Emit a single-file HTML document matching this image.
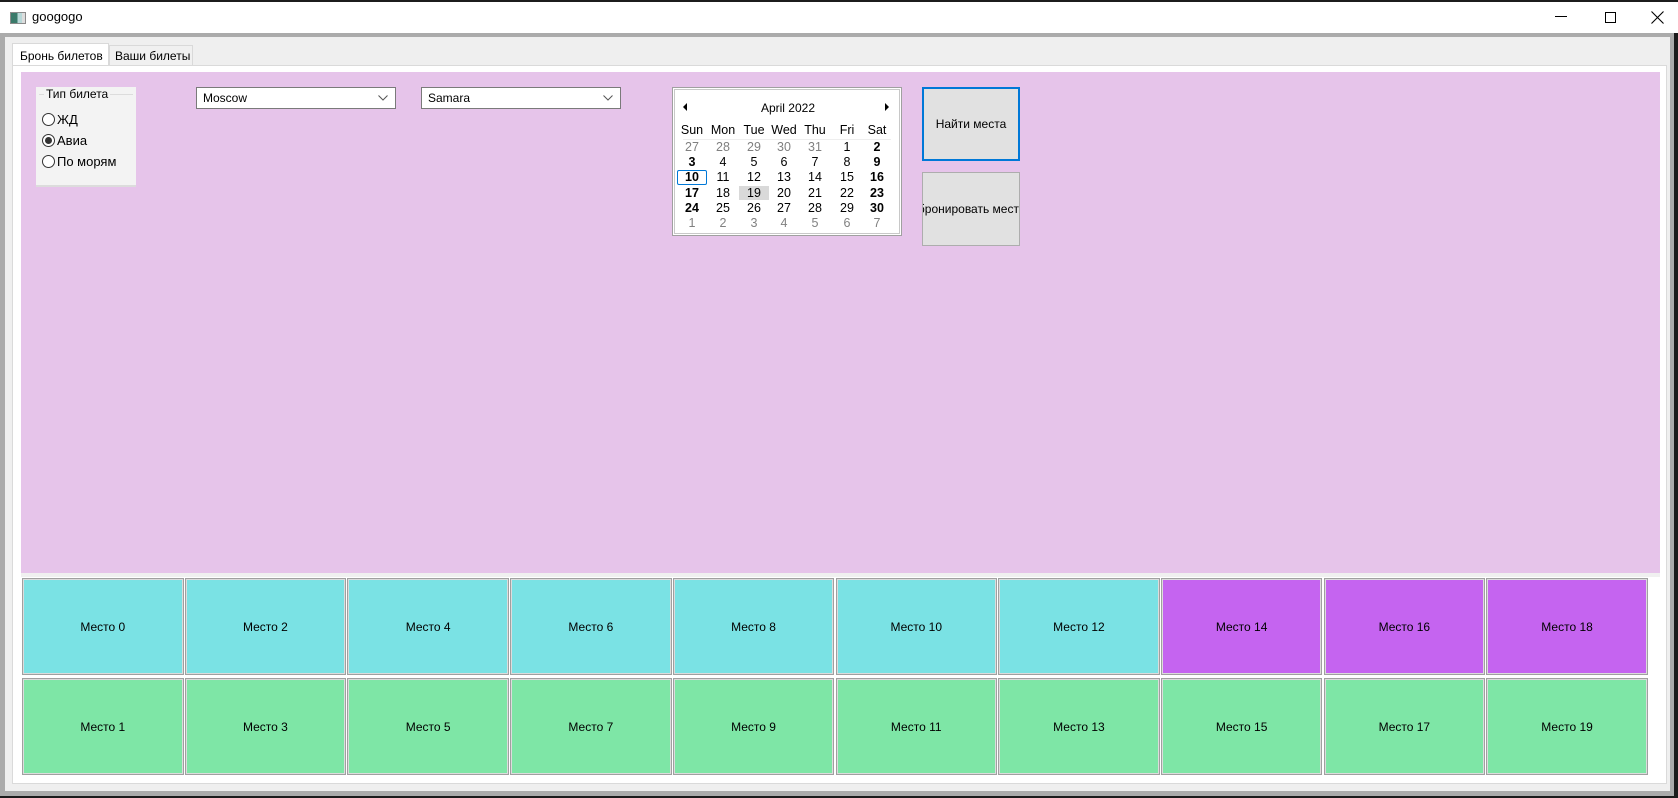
<!DOCTYPE html>
<html><head><meta charset="utf-8"><style>
*{margin:0;padding:0;box-sizing:border-box}
body{width:1678px;height:798px;background:#1c1c1c;position:relative;overflow:hidden;font-family:"Liberation Sans","DejaVu Sans",sans-serif;font-size:12px;color:#000}
.a{position:absolute}
.title{left:0;top:2px;width:1678px;height:31px;background:#fff}
.frame{left:0;top:33px;width:1674px;height:763px;background:#ababab}
.body{left:5px;top:37px;width:1665px;height:754px;background:#efefef}
.page{left:12px;top:65px;width:1655px;height:719px;background:#fff;border:1px solid #dadada}
.purple{left:21px;top:72px;width:1639px;height:501px;background:#e6c4ea}
.strip{left:21px;top:573px;width:1639px;height:4px;background:#f0f0f0}
.combo{height:22px;background:#fff;border:1px solid #7a7a7a;padding:3px 0 0 6px}
.combo svg{position:absolute;right:7px;top:7px}
.seat{display:flex;align-items:center;justify-content:center;border:1px solid #a0a0a0;box-shadow:inset 0 0 0 1px #dcdcdc}
.cal{left:672px;top:87px;width:230px;height:149px;background:#fff;border:1px solid #a0a0a0;box-shadow:inset 0 0 0 1px #fff,inset 0 0 0 2px #c8c8c8}
.cal span{position:absolute;width:24px;text-align:center;font-size:12.5px}
.g{color:#808080}.b{font-weight:bold}
.radio{width:13px;height:13px;border:1px solid #333;border-radius:50%;background:#fff}
</style></head><body>
<div class="a title"></div>
<div class="a" style="left:10px;top:12px;width:16px;height:12px;border:1px solid #8a8a8a;background:linear-gradient(90deg,#3a7a6a 0 45%,#b8d8d8 45% 80%,#ddd 80%)"></div>
<div class="a" style="left:32px;top:9px;font-size:13px">googogo</div>
<div class="a" style="left:1555px;top:16px;width:12px;height:1px;background:#000"></div>
<div class="a" style="left:1605px;top:12px;width:11px;height:11px;border:1px solid #000"></div>
<svg class="a" style="left:1651px;top:11px" width="13" height="13"><path d="M0.5 0.5L12.5 12.5M12.5 0.5L0.5 12.5" stroke="#000" stroke-width="1.1"/></svg>
<div class="a frame"></div>
<div class="a body"></div>
<div class="a" style="left:12px;top:43px;width:97px;height:23px;background:#fff;border:1px solid #d9d9d9;border-bottom:none;padding:5px 0 0 7px">Бронь билетов</div>
<div class="a" style="left:109px;top:45px;width:84px;height:20px;background:#f0f0f0;border:1px solid #d9d9d9;border-bottom:none;padding:3px 0 0 5px">Ваши билеты</div>
<div class="a page"></div>
<div class="a purple"></div>
<div class="a strip"></div>
<div class="a" style="left:36px;top:87px;width:100px;height:100px;background:#f3f3f3;border-bottom:2px solid #dcdcdc"></div>
<div class="a" style="left:39px;top:94px;width:94px;height:1px;background:#dcdcdc"></div>
<div class="a" style="left:44px;top:87px;background:#f3f3f3;padding:0 2px">Тип билета</div>
<div class="a radio" style="left:42px;top:113px"></div><div class="a" style="left:57px;top:112px;font-size:13px">ЖД</div>
<div class="a radio" style="left:42px;top:134px"></div><div class="a" style="left:45px;top:137px;width:7px;height:7px;border-radius:50%;background:#333"></div><div class="a" style="left:57px;top:133px;font-size:13px">Авиа</div>
<div class="a radio" style="left:42px;top:155px"></div><div class="a" style="left:57px;top:154px;font-size:13px">По морям</div>
<div class="a combo" style="left:196px;top:87px;width:200px">Moscow<svg width="10" height="6"><path d="M0.5 0.5L5 5L9.5 0.5" fill="none" stroke="#555"/></svg></div>
<div class="a combo" style="left:421px;top:87px;width:200px">Samara<svg width="10" height="6"><path d="M0.5 0.5L5 5L9.5 0.5" fill="none" stroke="#555"/></svg></div>
<div class="a cal">
<svg class="a" style="left:10px;top:15px" width="5" height="8"><path d="M4 0L0 4L4 8Z"/></svg>
<svg class="a" style="left:212px;top:15px" width="5" height="8"><path d="M0 0L4 4L0 8Z"/></svg>
<div class="a" style="left:0;top:13px;width:230px;text-align:center">April 2022</div>
<div class="a" style="left:10px;top:51px;width:208px;height:1px;background:#eee"></div>
<div id="cal"></div>
</div>
<div class="a" style="left:922px;top:87px;width:98px;height:74px;background:#e1e1e1;border:2px solid #0078d7;display:flex;align-items:center;justify-content:center">Найти места</div>
<div class="a" style="left:922px;top:172px;width:98px;height:74px;background:#e1e1e1;border:1px solid #adadad;overflow:hidden;white-space:nowrap"><span style="position:absolute;left:-19px;top:29px">Забронировать места</span></div>
<div id="seats"></div>
<script>
var c=document.getElementById('cal'),h='';
var xs=[7,38,69,99,130,162,192];
var names=['Sun','Mon','Tue','Wed','Thu','Fri','Sat'];
names.forEach(function(n,i){h+='<span style="left:'+(xs[i]-2)+'px;top:35px;width:28px">'+n+'</span>'});
var d=[[27,28,29,30,31,1,2],[3,4,5,6,7,8,9],[10,11,12,13,14,15,16],[17,18,19,20,21,22,23],[24,25,26,27,28,29,30],[1,2,3,4,5,6,7]];
d.forEach(function(r,ri){r.forEach(function(v,i){var cls='';if(ri==0&&i<5||ri==5)cls='g';else if(i==0||i==6)cls='b';var st='left:'+xs[i]+'px;top:'+(52+ri*15.2)+'px;';
if(ri==2&&i==0)st+='border:1px solid #0078d7;border-radius:2px;height:15px;line-height:13px;width:30px;margin-left:-3px;';
if(ri==3&&i==2)st+='background:#d9d9d9;width:30px;margin-left:-3px;';
h+='<span class="'+cls+'" style="'+st+'">'+v+'</span>'})});
c.innerHTML=h;
var s='',w=161.5,p=162.7;
for(var i=0;i<20;i++){var col=Math.floor(i/2),row=i%2;var bg=row?'#7ee6a6':(col>=7?'#c564f0':'#7ae2e4');
s+='<div class="a seat" style="left:'+(22+col*p)+'px;top:'+(578+row*100)+'px;width:'+w+'px;height:97px;background:'+bg+'">Место '+i+'</div>'}
document.getElementById('seats').innerHTML=s;
</script>
</body></html>
